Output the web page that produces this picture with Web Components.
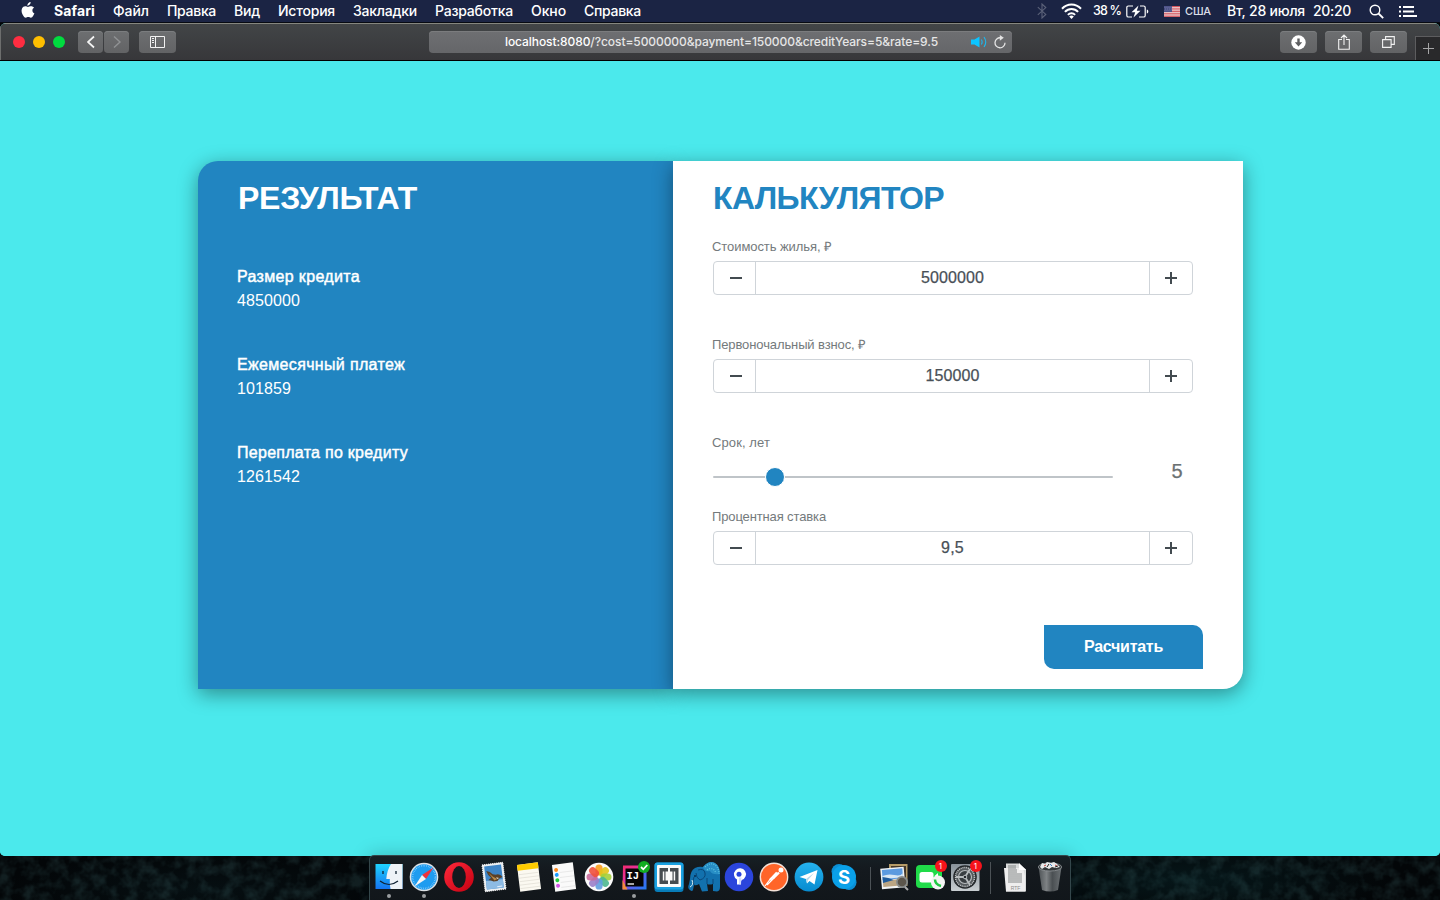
<!DOCTYPE html>
<html lang="ru">
<head>
<meta charset="utf-8">
<title>Кредитный калькулятор</title>
<style>
html,body{margin:0;height:100%;overflow:hidden;background:#04090c}
body{font-family:"Liberation Sans",Arial,sans-serif}
</style>
</head>
<body>
<mac-desktop></mac-desktop>
<script>
class Base extends HTMLElement{
  connectedCallback(){
    if(this.shadowRoot)return;
    this.attachShadow({mode:'open'}).innerHTML=this.render();
    this.ready();
  }
  ready(){}
}

/* One line of text tracked to an exact advance width */
class FitText extends Base{
  render(){return `<style>:host{display:inline-block;white-space:nowrap;flex:none}span{display:inline-block}</style><span><slot></slot></span>`}
  ready(){
    const s=this.shadowRoot.querySelector('span'),w=+this.getAttribute('w');
    const n=[...this.textContent].length;
    s.style.letterSpacing=((w-s.getBoundingClientRect().width)/n)+'px';
    this.style.width=w+'px';
  }
}

class MacDesktop extends Base{
  render(){return `<style>
    :host{display:flex;flex-direction:column;position:relative;width:1440px;height:900px;overflow:hidden;
      background:radial-gradient(ellipse 200px 40px at 1190px 880px,#06171a,transparent),radial-gradient(ellipse 200px 40px at 200px 890px,#060f12,transparent),#030608}
    .noise{position:absolute;left:0;top:850px;width:1440px;height:50px;opacity:.16}
    safari-window{position:relative}
    mac-dock{position:absolute;left:369px;top:855px}
  </style>
  <svg class="noise"><filter id="n"><feTurbulence type="fractalNoise" baseFrequency=".08" numOctaves="3" seed="4"/><feColorMatrix values="0 0 0 0 .12  0 0 0 0 .35  0 0 0 0 .36  0 2.400 0 0 -.9"/></filter><rect width="1440" height="50" filter="url(#n)"/></svg>
  <mac-menubar></mac-menubar><safari-window></safari-window><mac-dock></mac-dock>`}
}

class MacMenubar extends Base{
  render(){return `<style>
    :host{display:flex;align-items:center;flex:none;background:#1b2444;border-bottom:1px solid #070a12;box-sizing:border-box;height:23px;
      color:#fff;font:500 14px/22px Inter,sans-serif;position:relative}
    svg{display:block;flex:none}
    .apple{margin:0 19px 2px 21px}
    nav{display:flex;gap:18px;flex:1}
    b{font-weight:700}
    .bt{margin-right:14px;opacity:.28}.wifi{margin-right:11px}
    .pc{font-size:12.5px;margin-right:5px}.bat{margin-right:15px}.flag{margin-right:5px}
    .kb{font-size:11px;margin-right:16px;color:#dcdfe8}.d{margin-right:8px}.t{margin-right:18px}.s{margin-right:15px}.l{margin-right:23px}
  </style>
  <svg class="apple" width="14" height="17" viewBox="0 0 14 17"><path fill="#fff" d="M9.6 0c.1 1-.3 1.9-.9 2.6-.6.7-1.5 1.200-2.300 1.100-.1-1 .4-1.900.900-2.500C7.900.5 8.900.1 9.600 0zM13 5.700c-1 .6-1.600 1.500-1.600 2.700 0 1.400.8 2.400 2 2.900-.3.900-.7 1.700-1.200 2.400-.7 1-1.400 2-2.400 2s-1.300-.6-2.500-.6-1.600.6-2.500.6c-1 0-1.800-1-2.500-2C.8 11.700 0 8.700 1 6.500c.7-1.400 1.900-2.300 3.200-2.300 1.100 0 2 .7 2.800.7.700 0 1.800-.8 3.200-.7 1 0 2.100.5 2.800 1.500z"/></svg>
  <nav><fit-text w="41"><b>Safari</b></fit-text><fit-text w="36">Файл</fit-text><fit-text w="49">Правка</fit-text><fit-text w="26">Вид</fit-text><fit-text w="57">История</fit-text><fit-text w="64">Закладки</fit-text><fit-text w="78">Разработка</fit-text><fit-text w="35">Окно</fit-text><fit-text w="57">Справка</fit-text></nav>
  <svg class="bt" width="10" height="16" viewBox="0 0 10 16" fill="none" stroke="#fff" stroke-width="1.100"><path d="M.8 4.200l8 7.200L5 15V1l3.800 3.600-8 7.200"/></svg>
  <svg class="wifi" width="21" height="16" viewBox="0 0 21 16" fill="none" stroke="#fff" stroke-width="2"><path d="M1 5.800C6.300.2 14.700.2 20 5.800M3.900 8.900c3.700-3.900 9.500-3.900 13.200 0M6.900 11.900c2-2.100 5.200-2.100 7.200 0"/><path fill="#fff" stroke="none" d="M10.500 16l-2.300-2.500c1.300-1.200 3.300-1.200 4.600 0z"/></svg>
  <fit-text class="pc" w="28">38 %</fit-text>
  <svg class="bat" width="23" height="13" viewBox="0 0 23 13" fill="none" stroke="#fff" stroke-width="1.200"><path d="M7 1H2.400Q.8 1 .8 2.600v7.800Q.8 12 2.400 12H6M14 1h3.600q1.600 0 1.600 1.600v7.800q0 1.600-1.600 1.600H13"/><path fill="#fff" stroke="none" d="M12.500.5L5.500 7.300h3.700L7.500 12.500l7-6.800h-3.700zM20.800 4.500v4c2-.5 2-3.500 0-4z"/></svg>
  <svg class="flag" width="16" height="11" viewBox="0 0 16 11"><path fill="#f1eeee" d="M0 0h16v11H0z"/><path stroke="#d0424c" stroke-width=".9" d="M0 .5h16M0 2.200h16M0 3.900h16M0 5.600h16M0 7.300h16M0 9h16M0 10.600h16"/><path fill="#454a82" d="M0 0h8v6H0z"/><path stroke="#b9bcd6" stroke-width=".7" stroke-dasharray=".8 1.200" d="M.6 1.200H8M1.400 3H8M.6 4.800H8"/></svg>
  <fit-text class="kb" w="26">США</fit-text>
  <fit-text class="d" w="78">Вт, 28 июля</fit-text><fit-text class="t" w="38">20:20</fit-text>
  <svg class="s" width="15" height="15" viewBox="0 0 15 15" fill="none" stroke="#fff" stroke-width="1.400"><circle cx="6" cy="6" r="4.800"/><path stroke-width="1.800" d="M9.500 9.500l4.700 4.700"/></svg>
  <svg class="l" width="18" height="11" viewBox="0 0 18 11" stroke="#fff" stroke-width="1.800"><path d="M0 1h2M4 1h11M0 5.500h2M4 5.500h11M0 10h2M4 10h14"/></svg>`}
}

class ToolButton extends Base{
  render(){return `<style>:host{display:flex;align-items:center;justify-content:center;box-sizing:border-box;width:37px;height:22px;flex:none;border-radius:4px;
    background:linear-gradient(#6d6f71,#626365);box-shadow:inset 0 1px 0 #7b7d7f}</style><slot></slot>`}
}

class SafariWindow extends Base{
  render(){return `<style>
    :host{display:flex;flex-direction:column;width:1440px;height:833px;border-radius:6px 6px 5px 5px;overflow:hidden;background:#4be9ec}
    .bar{display:flex;align-items:center;height:38px;flex:none;box-sizing:border-box;border-top:1px solid #85867f;border-bottom:1px solid #000;
      background:linear-gradient(#424547,#37373a);box-shadow:inset 1px 0 #6d6e6d;position:relative}
    svg{display:block}
    i{width:12px;height:12px;border-radius:50%;margin-right:8px}
    .lights{display:flex;flex:none;margin:0 5px 0 13px}
    .back,.fwd{width:25px}.fwd{margin:0 10px 0 1px}
    .back{width:26px}.fwd{margin-left:0}
    .url{display:flex;align-items:center;flex:none;box-sizing:border-box;width:583px;height:22px;margin:0 268px 0 253px;padding-left:76px;border-radius:4px;
      background:linear-gradient(#6e6f72,#656669);box-shadow:inset 0 1px 0 #7b7c7e;color:#e6e6e6;font:500 12px/22px Inter,sans-serif}
    .back{width:25px}.fwd{margin-left:1px}
    .url b{font-weight:500;color:#fff}
    .snd{margin:0 6px 0 33px}
    .r{display:flex;flex:none;gap:8px}
    .tab{display:flex;align-items:center;justify-content:center;width:25px;height:24px;flex:none;align-self:flex-end;margin-left:8px;background:#29292b;border:1px solid #5d5d5f;border-right:0;border-bottom:0;box-sizing:border-box}
  </style>
  <div class="bar">
    <div class="lights"><i style="background:#ff2d41"></i><i style="background:#ffbf00"></i><i style="background:#00dc3f"></i></div>
    <tool-button class="back"><svg width="10" height="14" viewBox="0 0 10 14" fill="none" stroke="#f4f4f4" stroke-width="1.700"><path d="M8 1.500L2 7l6 5.500"/></svg></tool-button>
    <tool-button class="fwd"><svg width="10" height="14" viewBox="0 0 10 14" fill="none" stroke="#909294" stroke-width="1.400"><path d="M2 1.500L8 7l-6 5.500"/></svg></tool-button>
    <tool-button><svg width="15" height="12" viewBox="0 0 15 12" fill="none" stroke="#f2f2f2"><path d="M.5.500h14v11H.5zM5.500.5v11M2 2.500h2M2 4.500h2M2 6.500h2"/></svg></tool-button>
    <div class="url"><fit-text w="433"><b>localhost:8080</b>/?cost=5000000&amp;payment=150000&amp;creditYears=5&amp;rate=9.5</fit-text>
      <svg class="snd" width="17" height="12" viewBox="0 0 17 12" fill="none" stroke="#1cb9ef" stroke-width="1.100"><path fill="#0cc4ff" stroke="none" d="M0 3.500h3.500L8.500.5v11l-5-3H0z"/><path d="M10.300 3.500q1.700 2.500 0 5M13 1q3.500 5 0 10"/></svg>
      <svg width="12" height="14" viewBox="0 0 12 14" fill="none" stroke="#e4e4e4" stroke-width="1.300"><path d="M6.500 2.800A5 5 0 1 0 11 7.800"/><path fill="#e4e4e4" stroke="none" d="M5.800 0l4 2.800-4 3z"/></svg>
    </div>
    <div class="r">
      <tool-button><svg width="15" height="15" viewBox="0 0 15 15"><circle cx="7.500" cy="7.500" r="7.200" fill="#fff"/><path d="M7.500 3.500v5" stroke="#5d5e60" stroke-width="2.400"/><path fill="#5d5e60" d="M3.800 7.300h7.400L7.500 11.500z"/></svg></tool-button>
      <tool-button><svg width="12" height="16" viewBox="0 0 12 16" fill="none" stroke="#f2f2f2" stroke-width="1.100"><path d="M4 5.500H.7v9.800h10.600V5.500H8M6 11V1.200M3 4l3-3 3 3"/></svg></tool-button>
      <tool-button><svg width="13" height="12" viewBox="0 0 13 12" fill="none" stroke="#f2f2f2" stroke-width="1.100"><path d="M.6 3.600h8.500v7.800H.6zM3.600 3.600V.6h8.700v7.800H9.100"/></svg></tool-button>
    </div>
    <div class="tab"><svg width="11" height="11" viewBox="0 0 11 11" stroke="#a5a5a6"><path d="M5.500 0v11M0 5.500h11"/></svg></div>
  </div>
  <credit-page></credit-page>`}
}

class CreditPage extends Base{
  render(){return `<style>
    :host{display:flex;flex:1;padding:100px 197px 0 198px;align-items:flex-start;background:#4be9ec}
    result-panel,calc-panel{box-sizing:border-box;height:528px;box-shadow:0 5px 20px rgba(0,0,0,.4)}
    result-panel{width:475px;border-radius:20px 0 0 0}
    calc-panel{width:570px;border-radius:0 0 20px 0}
  </style><result-panel></result-panel><calc-panel></calc-panel>`}
}

class ResultPanel extends Base{
  render(){
    const rows=[['Размер кредита',123,'4850000',63],['Ежемесячный платеж',168,'101859',54],['Переплата по кредиту',171,'1261542',63]];
    return `<style>
    :host{display:block;background:#2185c1;color:#fff;padding:19px 40px}
    h2{margin:0 0 49px;font:700 32px/36px "Liberation Sans",sans-serif;height:36px}
    dl{margin:0 0 0 -1px;display:grid;gap:40px;font-size:16px;line-height:24px}
    dt{-webkit-text-stroke:.45px #fff;height:24px}dd{margin:0;height:24px}
  </style><h2><fit-text w="179">РЕЗУЛЬТАТ</fit-text></h2><dl>${rows.map(r=>`<div><dt><fit-text w="${r[1]}">${r[0]}</fit-text></dt><dd><fit-text w="${r[3]}">${r[2]}</fit-text></dd></div>`).join('')}</dl>`}
}

class StepperField extends Base{
  render(){const a=k=>this.getAttribute(k);return `<style>
    :host{display:block}
    label{display:block;height:20px;margin:0 0 4px -1px;font-size:13px;line-height:20px;color:#747a7c}
    .box{display:grid;grid-template-columns:41px 1fr 42px;height:34px;box-sizing:border-box;border:1px solid #cfd4d9;border-radius:4px;color:#495057}
    .v{display:flex;align-items:center;justify-content:center;border:solid #cfd4d9;border-width:0 1px;font-size:16px;-webkit-text-stroke:.25px #495057}
    .c{display:flex;align-items:center;justify-content:center}
    .m{padding-left:3px}
  </style><label><fit-text w="${a('lw')}">${a('label')}</fit-text></label>
  <div class="box"><div class="c m"><svg width="12" height="12" stroke="#434b50" stroke-width="2"><path d="M0 6h12"/></svg></div>
  <div class="v"><fit-text w="${a('vw')}">${a('value')}</fit-text></div>
  <div class="c"><svg width="12" height="12" stroke="#434b50" stroke-width="2"><path d="M0 6h12M6 0v12"/></svg></div></div>`}
}

class RangeField extends Base{
  render(){return `<style>
    :host{display:block;height:74px}
    label{display:block;height:20px;margin-left:-1px;font-size:13px;line-height:20px;color:#747a7c}
    .row{display:flex;align-items:center;height:48px}
    .track{display:flex;align-items:center;width:400px;height:2px;border-radius:1px;background:#bfc4c8}
    .knob{width:18px;height:18px;border:1px solid #fff;margin-left:52px;border-radius:50%;background:#2185c1;flex:none}
    output{width:20px;margin:-12px 0 0 54px;text-align:center;font-size:20px;color:#6b7173;-webkit-text-stroke:.25px #6b7173}
  </style><label><fit-text w="58">Срок, лет</fit-text></label><div class="row"><div class="track"><div class="knob"></div></div><output>5</output></div>`}
}

class CalcPanel extends Base{
  render(){return `<style>
    :host{display:flex;flex-direction:column;background:#fff;padding:19px 40px 20px;position:relative}
    h2{margin:0 0 21px;font:700 32px/36px "Liberation Sans",sans-serif;height:36px;color:#2185c1}
    stepper-field{width:480px;height:58px}
    .gap{margin-bottom:40px}
    button{align-self:flex-end;width:159px;height:44px;margin-top:60px;padding:0;border:0;border-radius:0 10px 0 10px;background:#2185c1;color:#fff;font:700 16px/44px "Liberation Sans",sans-serif}
  </style><h2><fit-text w="231">КАЛЬКУЛЯТОР</fit-text></h2>
  <stepper-field class="gap" label="Стоимость жилья, ₽" lw="120" value="5000000" vw="63"></stepper-field>
  <stepper-field class="gap" label="Первоночальный взнос, ₽" lw="154" value="150000" vw="54"></stepper-field>
  <range-field></range-field>
  <stepper-field label="Процентная ставка" lw="114" value="9,5" vw="23"></stepper-field>
  <button><fit-text w="79">Расчитать</fit-text></button>`}
}

class DockItem extends Base{
  render(){return `<style>
    :host{display:flex;flex-direction:column;align-items:center;width:35px;height:44px;position:relative;flex:none}
    ::slotted(svg){display:block;width:34px;height:36px;margin-top:3px;overflow:visible}
    .dot{width:4px;height:4px;border-radius:50%;background:#9a9da0;margin-top:-1.500px}
    .badge{position:absolute;left:22px;top:4px;width:12px;height:12px;border-radius:50%;background:#f5131b;color:#fff;font:8px/12px Inter,sans-serif;text-align:center}
  </style><slot></slot>${this.hasAttribute('running')?'<div class="dot"></div>':''}${this.hasAttribute('badge')?`<div class="badge">${this.getAttribute('badge')}</div>`:''}`}
}

class MacDock extends Base{
  render(){
    const petals=['#f99d1c','#e3c31a','#a3cf3b','#4cb78f','#5f9fe0','#9a7fc9','#c9699b','#f0503c'];
    const V='viewBox="-17 -18 34 36"';
    return `<style>
    :host{display:flex;align-items:flex-start;box-sizing:border-box;width:702px;height:50px;padding:0 1.500px;border:1px solid #34474b;border-bottom:0;border-radius:5px 5px 0 0;background:linear-gradient(#161f24,#14191e 30%,#11161a);box-shadow:0 0 18px rgba(0,30,40,.25)}
    .sep{width:1px;height:23px;background:#4c5256;flex:none;margin:11px 7px 0 8px}
    .sep.b{height:32px;margin:6px 7px 0 7px}
  </style>
  <dock-item running><svg ${V}><defs><linearGradient id="f" x2="0" y2="1"><stop stop-color="#1fd3ff"/><stop offset="1" stop-color="#1573f0"/></linearGradient></defs><path fill="url(#f)" d="M-13.500-13H13.500V12H-13.500z"/><path fill="#eef2f7" d="M2-13H13.500V12H1.500Q.5 7 .8 2h-3.500Q-2-7 2-13z"/><path d="M-6-6v3M7-6v3" stroke="#123" stroke-width="1.300"/><path d="M-9 4q9 7 18 0" fill="none" stroke="#123" stroke-width="1.200"/></svg></dock-item>
  <dock-item running><svg ${V}><circle r="14.300" fill="#dde2e6"/><circle r="12.800" fill="#1e9cf0"/><circle r="11.400" fill="none" stroke="#a8dcff" stroke-width="1.600" stroke-dasharray=".5 1.300"/><path fill="#f0323c" d="M9.500-9.500L2 2-2-2z"/><path fill="#f4f4f4" d="M-9.500 9.500L2 2-2-2z"/></svg></dock-item>
  <dock-item><svg ${V}><defs><linearGradient id="o" x2="1" y2="1"><stop stop-color="#ff2a3c"/><stop offset="1" stop-color="#c40010"/></linearGradient></defs><circle r="14.800" fill="url(#o)"/><ellipse rx="6.800" ry="11" fill="#14191e"/></svg></dock-item>
  <dock-item><svg ${V}><g transform="rotate(-7)"><path fill="#eceff1" stroke="#fff" stroke-dasharray="1 1" d="M-10.500-13.500H10.500V13.500H-10.500z"/><path fill="#3f86c8" d="M-8.500-11.500H8.500V11.500H-8.500z"/><path fill="#8dbbe4" d="M-8.500 3H8.500v8.500h-17z"/><path fill="#5b4026" d="M-7-7q4 1 6 4l3 1q4-1 6.500 3l-3.500 1-2 2.500-4 0q-3-2-5-2l3-2q-3-3-4-7.500z"/><path fill="#b98a4a" d="M-5-5l4 4.500 4 3-3 1z"/><path fill="#e6e2d5" d="M2 .5l3 1-2 1z"/><path stroke="#e4eefa" d="M2 10h5"/></g></svg></dock-item>
  <dock-item><svg ${V}><g transform="rotate(-7)"><path fill="#fbf9f1" d="M-10.500-13.500H10.500V13.500H-10.500z"/><path fill="#fc0" d="M-10.500-13.500H10.500v6H-10.500z"/><path stroke="#dcd9cf" stroke-width=".6" d="M-10-3.500H10M-10 0H10M-10 3.500H10M-10 7H10M-10 10.500H10"/></g></svg></dock-item>
  <dock-item><svg ${V}><g transform="rotate(-7)"><path fill="#fafafa" d="M-10.500-13.500H10.500V13.500H-10.500z"/><path stroke="#dedede" stroke-width=".6" d="M-4-5H10M-4 0H10M-4 5H10M-4 10H10"/><circle cx="-7" cy="-8" r="2" fill="#ff8a1c"/><circle cx="-7" cy="-3" r="2" fill="#1c9cff"/><circle cx="-7" cy="2.500" r="2" fill="#22ce3c"/><circle cx="-7" cy="8" r="2" fill="#d355e8"/></g></svg></dock-item>
  <dock-item><svg ${V}><circle r="14.300" fill="#fafafa"/>${petals.map((c,i)=>`<rect x="-3.600" y="-12.500" width="7.200" height="11" rx="3.600" fill="${c}" opacity=".9" transform="rotate(${i*45})"/>`).join('')}</svg></dock-item>
  <dock-item running><svg ${V}><defs><linearGradient id="j" x2="1" y2="1"><stop stop-color="#f22b6c"/><stop offset=".35" stop-color="#e8319c"/><stop offset=".6" stop-color="#5a62f0"/><stop offset="1" stop-color="#1f7cf4"/></linearGradient></defs><path fill="url(#j)" d="M-11-11.500H12.500V12.500H-11.500z"/><path fill="#f68b3a" d="M-11.500 3l5 9.500h-5z"/><path fill="#050505" d="M-8.500-8.500H9.500V9.500H-8.500z"/><text x="-7.500" y="2" fill="#fff" font-family="Liberation Mono" font-weight="700" font-size="10.500">IJ</text><path stroke="#fff" stroke-width="1.300" d="M-6.500 7H0"/><circle cx="10" cy="-10" r="6" fill="#12ad22"/><path d="M7-10l2.300 2.300L13.300-12" fill="none" stroke="#fff" stroke-width="1.800"/></svg></dock-item>
  <dock-item><svg ${V}><rect x="-14.500" y="-14.500" width="29" height="29.500" rx="3" fill="#087cb8"/><rect x="-14.500" y="-14.500" width="29" height="27" rx="3" fill="#1aa0e0"/><rect x="-12" y="-12" width="24" height="22" rx="1" fill="#fafafa"/><path fill="#464c50" d="M-9.500-9H-1v3.500h-2.500v9H-1V7H-9.500zM9.500-9H1v3.500h2.500v9H1V7H9.500z"/><path fill="#fafafa" d="M-6.200-5.500h1.500v9h-1.500zM4.700-5.500h1.500v9H4.700z"/></svg></dock-item>
  <dock-item><svg ${V}><path fill="#1271ae" d="M-14 13q-3-2-1-6l1-5q0-8 5-11 4-2 8-1Q5-17 11-14q5 3 5 12v12q0 4-3 4.500l-4-.5V7q-4 1-6 0l1 7-6 .5L-5 7q-3 2-5 1l-1 5q-1 2-3 0z"/><path fill="#3098cd" opacity=".75" d="M-1-10Q5-17 11-14q5 3 5 11-8 1-10-3Q0-5-1-10z"/><path fill="none" stroke="#0a4779" d="M-10 8q-2-4 0-8M-6-7q6-2 7 3t-5 7q-4-2-4-7M3 7V1M9 7V2"/><path fill="none" stroke="#58c2df" stroke-width="1.300" stroke-dasharray="1 1.300" d="M1-10Q6-15 11-12q4 3 4 9M3-7q6-4 9 3"/><path d="M-12 3q2 5-2 7" stroke="#d7edf2" fill="none"/><circle cx="-9" cy="-1" r="1" fill="#062c52"/></svg></dock-item>
  <dock-item><svg ${V}><circle r="14.300" fill="#2b45dc"/><path fill="#fff" d="M-2 7.500V2.500A6 6 0 1 1 2.800 3l-.8 1.500v3z"/><circle cy="-2.700" r="2.500" fill="#2b45dc"/><path fill="#b9c4ff" d="M0 .5h2.500l-.5 7H0z" opacity=".6"/></svg></dock-item>
  <dock-item><svg ${V}><circle r="14.400" fill="#f4e2d8"/><circle r="13" fill="#ff6529"/><circle cx="7" cy="-7" r="2.500" fill="#fff"/><path d="M5-4.500L-1 1.500M3-4.500L-4 3" stroke="#fff" stroke-width="2.400"/><path d="M-3 1L-9 9M0 1L-7 8" stroke="#fff" stroke-width="1.200"/></svg></dock-item>
  <dock-item><svg ${V}><defs><linearGradient id="t" x2="0" y2="1"><stop stop-color="#25b2ee"/><stop offset="1" stop-color="#078bd0"/></linearGradient></defs><circle r="14.400" fill="url(#t)"/><path fill="#fff" d="M-9.500 0L8.500-7 5.500 7.500.5 4-2 6.500-3 2z"/><path fill="#b8d8ea" d="M-3 2L5-4-1 3-2 6.500z"/></svg></dock-item>
  <dock-item><svg ${V}><circle cx="-5" cy="-5.500" r="7.500" fill="#0b8fd5"/><circle cx="5" cy="5.500" r="7.500" fill="#0b8fd5"/><circle r="12" fill="#0aa0e8"/><text y="6.800" text-anchor="middle" fill="#fff" font-family="Inter" font-weight="700" font-size="18.500">S</text></svg></dock-item>
  <div class="sep"></div>
  <dock-item><svg ${V}><path fill="#b59b67" d="M-6-13H12.500V9H-6z"/><path fill="#44382a" d="M-4-11H11V7H-4z"/><g transform="rotate(-5)"><path fill="#f1f3f4" d="M-14-9.500H9.500V11H-14z"/><path fill="#5b9ae0" d="M-12.500-8H8V2h-20.500z"/><path fill="#d8e7f4" d="M-12.500-2q6-2 12 0t8.500-1v4h-20.500z"/><path fill="#bba583" d="M-12.500 4q9-3 20.500 0v5h-20.500z"/><path fill="#1e5b9d" d="M-12.500-1q6 1 11 4l-11 2z"/></g><circle cx="7" cy="5" r="6" fill="#888c8c"/><circle cx="7" cy="5" r="4.300" fill="#5c564c"/><path d="M10 10l3 3" stroke="#aaa" stroke-width="2"/></svg></dock-item>
  <dock-item badge="1"><svg ${V}><rect x="-14" y="-12" width="26" height="23" rx="4" fill="#20db49"/><rect x="-10.500" y="-5" width="14" height="10.500" rx="2.500" fill="#fff"/><path fill="#fff" d="M4.500-1L8-4v8z"/><circle cx="8" cy="5.500" r="7" fill="#f4f4f4"/><path d="M5 2.500q0 5 6 6.500" fill="none" stroke="#20c943" stroke-width="2.500"/></svg></dock-item>
  <dock-item badge="1"><svg ${V}><defs><linearGradient id="g" x2="0" y2="1"><stop stop-color="#88929a"/><stop offset="1" stop-color="#c9ced1"/></linearGradient></defs><rect x="-14" y="-13" width="28.500" height="27" rx="1" fill="url(#g)"/><circle r="11.800" fill="#24282b"/><circle r="9.500" fill="#555a5d" stroke="#bfc2c4" stroke-width="1.500" stroke-dasharray="1.200 .7"/><circle r="6.500" fill="#393e41" stroke="#b8bcbe" stroke-width="1.200"/><path d="M0 0H-9M0 0L5-8M0 0L5 8" stroke="#b8bcbe" stroke-width="1.800"/><circle r="1.800" fill="#25292c" stroke="#b8bcbe"/></svg></dock-item>
  <div class="sep b"></div>
  <dock-item><svg ${V}><path fill="#d8dada" d="M-9-13.500H4l7 6V14.500H-9z"/><path fill="#eee" d="M-11-9h5l14 0 2 8v15.500H-9z"/><path stroke="#777b7c" stroke-width=".9" d="M-7-11H1M-7-9H1M-7-7H2M-7-5H2M-7-3H7M-7-1H7M-7 1H7M-7 3H7M-7 5H7"/><path fill="#fff" d="M4-14l7 7H4z"/><text y="12.500" x=".5" text-anchor="middle" fill="#8b8b8b" font-family="Liberation Sans" font-size="5">RTF</text></svg></dock-item>
  <dock-item><svg ${V}><defs><linearGradient id="k"><stop stop-color="#54595c"/><stop offset=".35" stop-color="#8a8e90"/><stop offset=".6" stop-color="#505558"/><stop offset="1" stop-color="#777c7f"/></linearGradient></defs><path fill="url(#k)" opacity=".9" d="M-11.500-10H11.500L8 13q-8 3-16 0z"/><ellipse cy="-10" rx="11.700" ry="4" fill="#323739" stroke="#92979a" stroke-width=".8"/><path fill="#e8eaeb" d="M-10-10l2-4 3 1 2-2 4 1 3-1 3 2 3 3-4 1-4-1-3 2-4-2-3 2z"/><path stroke="#c34640" d="M-6-11l2-1M5-12l2 1"/><path stroke="#3c7dc0" d="M0-13l2 2"/><path stroke="#222" d="M-3-10l2-3M8-11l-3 1"/></svg></dock-item>`}
}

[['fit-text',FitText],['tool-button',ToolButton],['stepper-field',StepperField],['range-field',RangeField],['result-panel',ResultPanel],['calc-panel',CalcPanel],['credit-page',CreditPage],['dock-item',DockItem],['mac-dock',MacDock],['safari-window',SafariWindow],['mac-menubar',MacMenubar],['mac-desktop',MacDesktop]].forEach(([n,c])=>customElements.define(n,c));
</script>
</body>
</html>
